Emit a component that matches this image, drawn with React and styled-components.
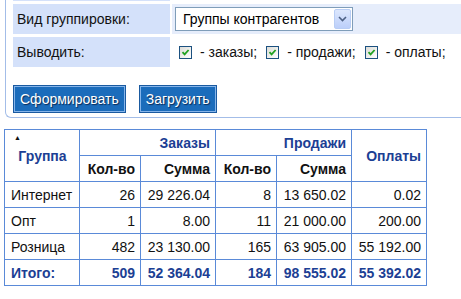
import styled, { createGlobalStyle } from 'styled-components';

const GlobalStyle = createGlobalStyle`
  body {
    margin: 0;
    background: #fff;
    font-family: "Liberation Sans", Arial, sans-serif;
    font-size: 13px;
    color: #111;
  }
`;

const rows = [
    { name: 'Интернет', ordersQty: '26', ordersSum: '29 226.04', salesQty: '8', salesSum: '13 650.02', paid: '0.02' },
    { name: 'Опт', ordersQty: '1', ordersSum: '8.00', salesQty: '11', salesSum: '21 000.00', paid: '200.00' },
    { name: 'Розница', ordersQty: '482', ordersSum: '23 130.00', salesQty: '165', salesSum: '63 905.00', paid: '55 192.00' },
];

const total = { name: 'Итого:', ordersQty: '509', ordersSum: '52 364.04', salesQty: '184', salesSum: '98 555.02', paid: '55 392.02' };

const Check = () => (
    <CheckBox>
        <svg width="9" height="9" viewBox="0 0 9 9">
            <path d="M1.5 4.2 L3.6 6.4 L7.6 2" fill="none" stroke="#21a121" strokeWidth="1.8" />
        </svg>
    </CheckBox>
);

const App = () => {
    return (
        <>
            <GlobalStyle />
            <Panel>
                <FormGrid>
                    <Label $thin />
                    <Value $thin />
                    <Label>Вид группировки:</Label>
                    <Value $shaded>
                        <Select>
                            <span>Группы контрагентов</span>
                            <SelectArrow>
                                <svg width="9" height="6" viewBox="0 0 9 6">
                                    <path d="M1 1 L4.5 4.5 L8 1" fill="none" stroke="#4d6185" strokeWidth="1.6" />
                                </svg>
                            </SelectArrow>
                        </Select>
                    </Value>
                    <Label>Выводить:</Label>
                    <Value>
                        <CheckItem><Check />- заказы;</CheckItem>
                        <CheckItem><Check />- продажи;</CheckItem>
                        <CheckItem><Check />- оплаты;</CheckItem>
                    </Value>
                </FormGrid>
                <Buttons>
                    <Button>Сформировать</Button>
                    <Button>Загрузить</Button>
                </Buttons>
            </Panel>

            <Table>
                <colgroup>
                    <col style={{ width: 75 }} />
                    <col style={{ width: 61 }} />
                    <col style={{ width: 75 }} />
                    <col style={{ width: 61 }} />
                    <col style={{ width: 75 }} />
                    <col style={{ width: 75 }} />
                </colgroup>
                <thead>
                    <tr>
                        <GroupTh rowSpan={2} $center>
                            <SortArrow>▲</SortArrow>
                            Группа
                        </GroupTh>
                        <GroupTh colSpan={2}>Заказы</GroupTh>
                        <GroupTh colSpan={2}>Продажи</GroupTh>
                        <GroupTh rowSpan={2}>Оплаты</GroupTh>
                    </tr>
                    <tr>
                        <SubTh>Кол-во</SubTh>
                        <SubTh>Сумма</SubTh>
                        <SubTh>Кол-во</SubTh>
                        <SubTh>Сумма</SubTh>
                    </tr>
                </thead>
                <tbody>
                    {rows.map(row => (
                        <tr key={row.name}>
                            <Td $left>{row.name}</Td>
                            <Td>{row.ordersQty}</Td>
                            <Td>{row.ordersSum}</Td>
                            <Td>{row.salesQty}</Td>
                            <Td>{row.salesSum}</Td>
                            <Td>{row.paid}</Td>
                        </tr>
                    ))}
                    <tr>
                        <Td $left $total>{total.name}</Td>
                        <Td $total>{total.ordersQty}</Td>
                        <Td $total>{total.ordersSum}</Td>
                        <Td $total>{total.salesQty}</Td>
                        <Td $total>{total.salesSum}</Td>
                        <Td $total>{total.paid}</Td>
                    </tr>
                </tbody>
            </Table>
        </>
    )
}

const Panel = styled.div`
margin-left: 5px;
border-left: 1px solid #a3bde8;
border-bottom: 1px solid #a3bde8;
border-bottom-left-radius: 6px;
padding: 0 0 4px 7px;
`;

const FormGrid = styled.div`
display: grid;
grid-template-columns: 157px 1fr;
column-gap: 2px;
row-gap: 3px;
`;

const Label = styled.div`
background: #d4e1fa;
height: ${p => p.$thin ? '1px' : '30px'};
padding-left: 4px;
display: flex;
align-items: center;
color: #111;
font-size: 14px;
`;

const Value = styled.div`
background: ${p => p.$shaded ? '#e6edfb' : '#fff'};
height: ${p => p.$thin ? '1px' : '30px'};
display: flex;
align-items: center;
padding-left: 3px;
gap: 9px;
`;

const Select = styled.div`
width: 178px;
height: 24px;
box-sizing: border-box;
border: 1px solid #7f9db9;
background: #fff;
display: flex;
align-items: center;
justify-content: space-between;
padding: 1px 1px 1px 7px;
font-size: 14px;
color: #000;
`;

const SelectArrow = styled.span`
width: 17px;
height: 20px;
box-sizing: border-box;
border: 1px solid #b8cdf5;
border-radius: 2px;
background: linear-gradient(#dce7fd, #bccffa);
display: flex;
align-items: center;
justify-content: center;
`;

const CheckItem = styled.label`
display: flex;
align-items: center;
gap: 8px;
font-size: 14px;
color: #111;
&:first-child { margin-left: 4px; }
`;

const CheckBox = styled.span`
width: 13px;
height: 13px;
box-sizing: border-box;
border: 1px solid #1c5180;
background: linear-gradient(135deg, #dcdcd7, #fff);
display: flex;
align-items: center;
justify-content: center;
`;

const Buttons = styled.div`
display: flex;
gap: 13px;
margin-top: 18px;
`;

const Button = styled.button`
height: 28px;
padding: 0 6px;
border: 1px solid #1a5aa0;
box-shadow: inset 0 0 0 1px #86b5ea;
background: #1b6cbb;
color: #fff;
font-family: "Liberation Sans", Arial, sans-serif;
font-size: 14px;
text-shadow: 1px 1px 1px #0b2b55;
cursor: pointer;
`;

const Table = styled.table`
margin: 11px 0 0 4px;
border-collapse: collapse;
table-layout: fixed;
width: 422px;
border: 1px solid #5a8ad8;

th, td {
    border: 1px solid #5a8ad8;
    height: 26px;
    padding: 0 5px 0 6px;
    box-sizing: border-box;
}
`;

const GroupTh = styled.th`
position: relative;
text-align: ${p => p.$center ? 'center' : 'right'};
color: #1c3f94;
font-weight: bold;
font-size: 14px;
`;

const SortArrow = styled.span`
position: absolute;
left: 9px;
top: 4px;
font-size: 7px;
color: #111;
`;

const SubTh = styled.th`
text-align: right;
font-weight: bold;
font-size: 14px;
color: #111;
`;

const Td = styled.td`
text-align: ${p => p.$left ? 'left' : 'right'};
font-weight: ${p => p.$total ? 'bold' : 'normal'};
color: ${p => p.$total ? '#1c3f94' : '#111'};
font-size: 14px;
`;

export default App;
